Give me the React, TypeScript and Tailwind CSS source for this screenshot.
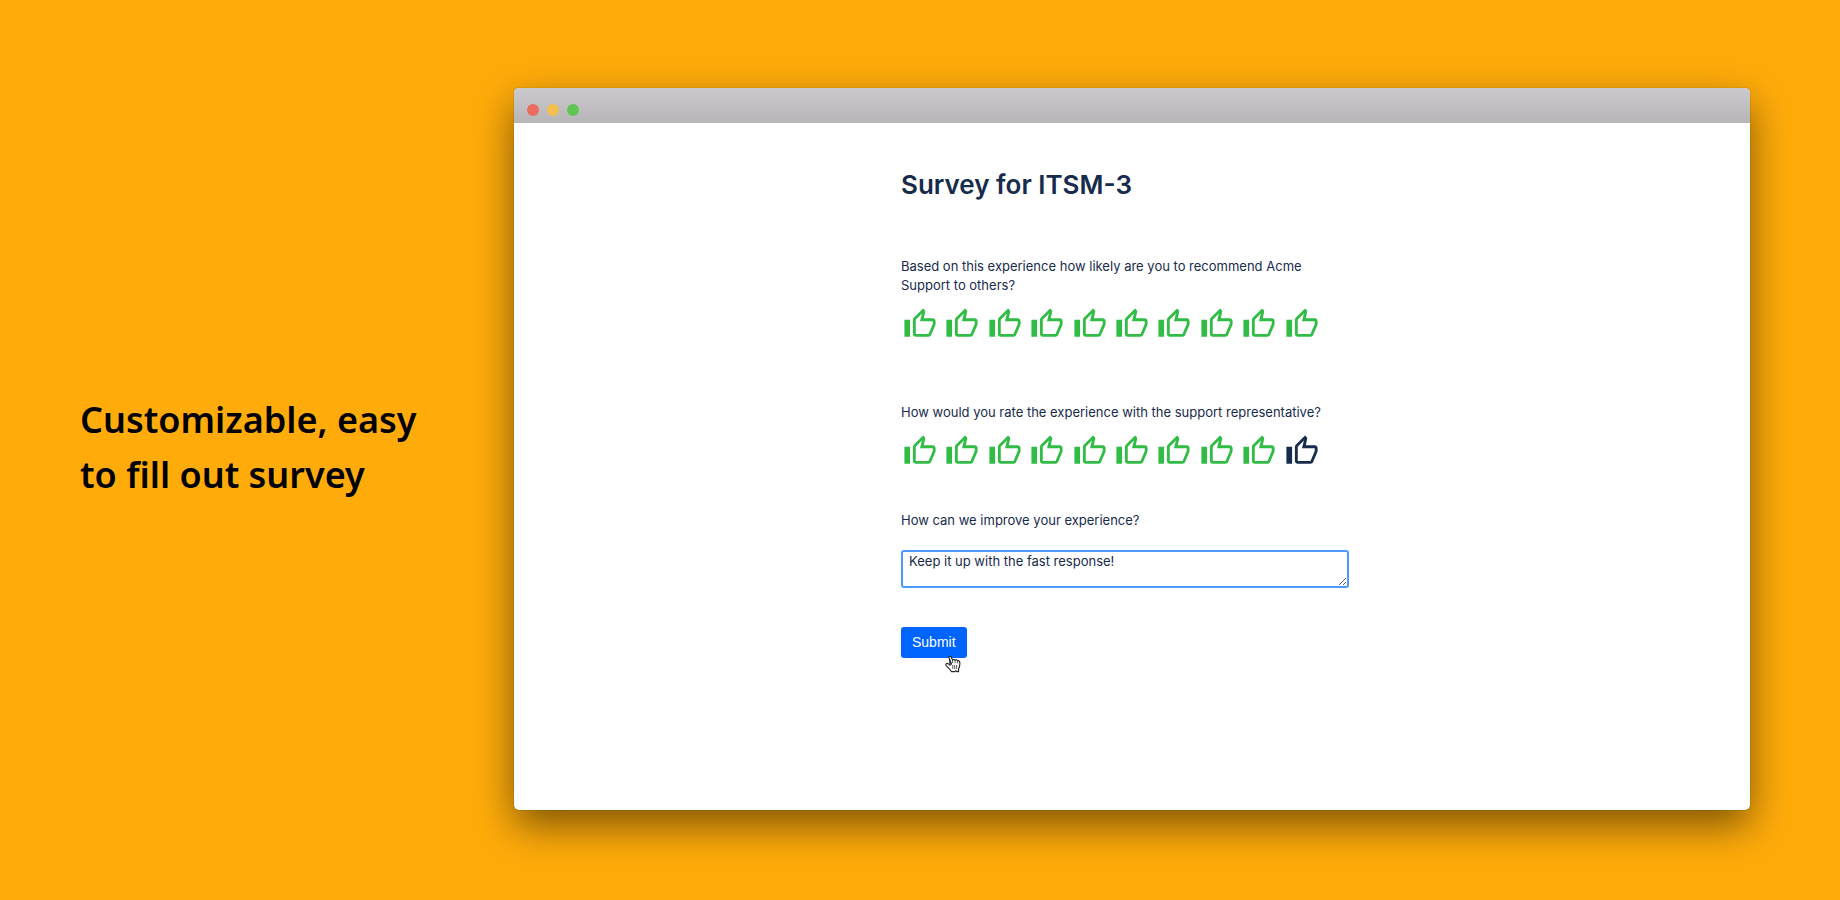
import { useState } from "react";
import { MdOutlineThumbUp } from "react-icons/md";

const SCALE = [1, 2, 3, 4, 5, 6, 7, 8, 9, 10];

type RatingProps = {
  name: string;
  question: string;
  value: number;
  onChange: (value: number) => void;
};

// Ten thumbs, everything up to the chosen one is green
const Rating = ({ name, question, value, onChange }: RatingProps) => (
  <fieldset>
    <legend className="text-[13px] leading-[19px]">{question}</legend>
    <div className="mt-3 grid w-[424px] grid-cols-10">
      {SCALE.map((n) => (
        <label
          key={n}
          className={`relative cursor-pointer pl-0.5 ${
            n <= value ? "text-[#30bc45]" : "text-[#172b4d]"
          }`}
        >
          <input
            type="radio"
            name={name}
            value={n}
            checked={n === value}
            onChange={() => onChange(n)}
            aria-label={`${n} out of 10`}
            className="sr-only"
          />
          <MdOutlineThumbUp className="h-[34px] w-[34px]" />
        </label>
      ))}
    </div>
  </fieldset>
);

const HandCursor = () => (
  <svg
    viewBox="0 0 16 18"
    className="pointer-events-none absolute top-7 left-11 h-[18px] w-4"
    aria-hidden="true"
  >
    <path
      d="M6.6 9.2L4.1 3C3.5 1.3 5.5.6 6.2 2.1L7.6 5.2C8.2 4.3 9.6 4.3 10.1 5.2C10.9 4.5 12.2 4.8 12.6 5.8C13.6 5.4 14.7 6 14.8 7.3C15 9.6 15.1 11.6 13.6 13.6V16.6H11.8L10.8 15.6L9.6 16.6H6.4C5.4 14.4 3.2 12.6 1.2 10.6C.2 9.2 1.6 8 3 8.6L5.2 10.2L4.4 4Z"
      fill="#fff"
      stroke="#222"
      strokeWidth="1.1"
      strokeLinejoin="round"
    />
    <path
      d="M7.6 5.2V7.6M10.1 5.4V7.8M12.6 6V8M7.8 10.4V13.6M9.7 10.4V13.6M11.6 10.4V13.6"
      fill="none"
      stroke="#333"
      strokeWidth="0.8"
      strokeLinecap="round"
    />
  </svg>
);

const SurveyForm = () => {
  const [recommend, setRecommend] = useState(10);
  const [experience, setExperience] = useState(9);
  const [comment, setComment] = useState("Keep it up with the fast response!");

  return (
    <form
      onSubmit={(e) => e.preventDefault()}
      className="mx-auto w-[462px] max-w-full pt-[45px] pb-10 text-[#172b4d]"
    >
      <h2 className="text-[26px] leading-[34px] font-semibold">
        Survey for ITSM-3
      </h2>

      <div className="mt-[55px] pr-10">
        <Rating
          name="recommend"
          question="Based on this experience how likely are you to recommend Acme Support to others?"
          value={recommend}
          onChange={setRecommend}
        />
      </div>

      <div className="mt-[62px]">
        <Rating
          name="experience"
          question="How would you rate the experience with the support representative?"
          value={experience}
          onChange={setExperience}
        />
      </div>

      <label
        htmlFor="comment"
        className="mt-[43px] block text-[13px] leading-[19px]"
      >
        How can we improve your experience?
      </label>
      <textarea
        id="comment"
        value={comment}
        onChange={(e) => setComment(e.target.value)}
        className="mt-5 block h-[38px] w-[448px] resize rounded-[3px] border-2 border-[#4c9aff] px-1.5 text-[13px] leading-[19px] outline-none"
      />

      <div className="relative mt-[39px] w-fit">
        <button
          type="submit"
          className="h-[31px] cursor-pointer rounded-[3px] bg-[#0065ff] px-[11px] font-['Liberation_Sans',sans-serif] text-[14px] text-white"
        >
          Submit
        </button>
        <HandCursor />
      </div>
    </form>
  );
};

const App = () => {
  return (
    <div className="flex min-h-screen bg-[#ffac0a] pt-[88px] pr-[90px] pb-[90px] font-['Inter',sans-serif]">
      <h1 className="w-[514px] shrink-0 self-center pb-1 pl-20 font-['Noto_Sans',sans-serif] text-[36px] leading-[55px] font-semibold text-black">
        Customizable, easy
        <br />
        to fill out survey
      </h1>

      {/* Browser window */}
      <main className="flex-1 overflow-hidden rounded-[5px] bg-white shadow-[0_0_1px_rgba(0,0,0,0.5),0_16px_40px_rgba(0,0,0,0.5)]">
        <div className="flex h-[35px] items-center gap-2 bg-linear-to-b from-[#cbc9cb] to-[#b8b5b8] px-[13px] pt-2">
          <span className="h-3 w-3 rounded-full bg-[#ec6a5e]" />
          <span className="h-3 w-3 rounded-full bg-[#f4bf4f]" />
          <span className="h-3 w-3 rounded-full bg-[#61c554]" />
        </div>
        <SurveyForm />
      </main>
    </div>
  );
};

export default App;
